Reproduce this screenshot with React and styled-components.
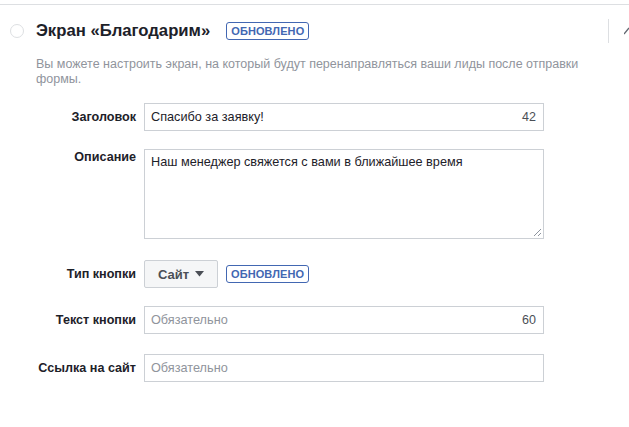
import styled, { createGlobalStyle } from "styled-components";

const GlobalStyle = createGlobalStyle`
  body {
    margin: 0;
    background: #fff;
    font-family: "Liberation Sans", Arial, sans-serif;
    color: #1d2129;
  }
`;

const Panel = styled.div`
  width: 629px;
  height: 427px;
  border-top: 1px solid #dddfe2;
  margin-top: 4px;
  box-sizing: border-box;
  overflow: hidden;
`;

const Header = styled.div`
  display: flex;
  align-items: center;
  height: 42px;
  padding: 9px 0 0 10px;
  box-sizing: border-box;
`;

const Radio = styled.span`
  width: 14px;
  height: 14px;
  border: 1px solid #dddfe2;
  border-radius: 50%;
  box-sizing: border-box;
  margin-right: 12px;
`;

const Title = styled.h2`
  margin: 0;
  font-size: 16.7px;
  font-weight: bold;
  color: #1d2129;
`;

const Badge = styled.span`
  display: inline-flex;
  align-items: center;
  height: 18px;
  padding: 0 4px;
  border: 1px solid #4267b2;
  border-radius: 3px;
  color: #4267b2;
  font-size: 11px;
  font-weight: bold;
  margin-left: ${(props) => props.ml || 16}px;
  box-sizing: border-box;
  letter-spacing: 0.1px;
`;

const Spacer = styled.div`
  flex: 1;
`;

const Divider = styled.span`
  width: 1px;
  height: 24px;
  background: #dddfe2;
  margin-right: 15px;
`;

const Intro = styled.p`
  margin: 10px 0 0 36px;
  width: 560px;
  font-size: 12.5px;
  line-height: 15px;
  color: #90949c;
`;

const Form = styled.div`
  display: flex;
  flex-direction: column;
  margin-top: 16px;
`;

const Row = styled.div`
  display: flex;
  align-items: ${(props) => (props.top ? "flex-start" : "center")};
  margin-top: ${(props) => props.mt || 0}px;
`;

const Label = styled.label`
  width: 136px;
  flex: none;
  text-align: right;
  font-size: 12.6px;
  font-weight: bold;
  color: #1d2129;
  margin-right: 8px;
  ${(props) => props.top && "padding-top: 1px;"}
`;

const Field = styled.div`
  position: relative;
  width: 400px;
  height: ${(props) => props.h || 28}px;
  border: 1px solid #ccd0d5;
  box-sizing: border-box;
  display: flex;
  align-items: ${(props) => (props.area ? "flex-start" : "center")};
  padding: ${(props) => (props.area ? "5px 6px" : "0 7px 0 6px")};
  font-size: 12.7px;
  color: ${(props) => (props.placeholder ? "#90949c" : "#1d2129")};
`;

const Value = styled.span`
  flex: 1;
`;

const Counter = styled.span`
  color: #4b4f56;
  font-size: 12.5px;
`;

const Grip = styled.svg`
  position: absolute;
  right: 1px;
  bottom: 1px;
`;

const Select = styled.button`
  display: inline-flex;
  align-items: center;
  gap: 6px;
  height: 28px;
  width: 74px;
  justify-content: center;
  padding: 0;
  border: 1px solid #ccd0d5;
  border-radius: 2px;
  background: #f5f6f7;
  font-family: inherit;
  font-size: 13px;
  font-weight: bold;
  color: #4b4f56;
`;

export default function App() {
  return (
    <>
      <GlobalStyle />
      <Panel>
        <Header>
          <Radio />
          <Title>Экран «Благодарим»</Title>
          <Badge>ОБНОВЛЕНО</Badge>
          <Spacer />
          <Divider />
          <svg width="5" height="10" viewBox="0 0 5 10">
            <path d="M0 8 L5 2" stroke="#606770" strokeWidth="1.3" fill="none" />
          </svg>
        </Header>
        <Intro>
          Вы можете настроить экран, на который будут перенаправляться ваши лиды
          после отправки формы.
        </Intro>
        <Form>
          <Row>
            <Label>Заголовок</Label>
            <Field>
              <Value>Спасибо за заявку!</Value>
              <Counter>42</Counter>
            </Field>
          </Row>
          <Row top mt={18}>
            <Label top>Описание</Label>
            <Field area h={90}>
              <Value>Наш менеджер свяжется с вами в ближайшее время</Value>
              <Grip width="9" height="9" viewBox="0 0 9 9">
                <path d="M1 8 L8 1 M5 8 L8 5" stroke="#8d949e" strokeWidth="1" />
              </Grip>
            </Field>
          </Row>
          <Row mt={21}>
            <Label>Тип кнопки</Label>
            <Select>
              Сайт
              <svg width="9" height="6" viewBox="0 0 9 6">
                <path d="M0 0 H9 L4.5 5.5 Z" fill="#4b4f56" />
              </svg>
            </Select>
            <Badge ml={8}>ОБНОВЛЕНО</Badge>
          </Row>
          <Row mt={18}>
            <Label>Текст кнопки</Label>
            <Field placeholder>
              <Value>Обязательно</Value>
              <Counter>60</Counter>
            </Field>
          </Row>
          <Row mt={20}>
            <Label>Ссылка на сайт</Label>
            <Field placeholder>
              <Value>Обязательно</Value>
            </Field>
          </Row>
        </Form>
      </Panel>
    </>
  );
}
